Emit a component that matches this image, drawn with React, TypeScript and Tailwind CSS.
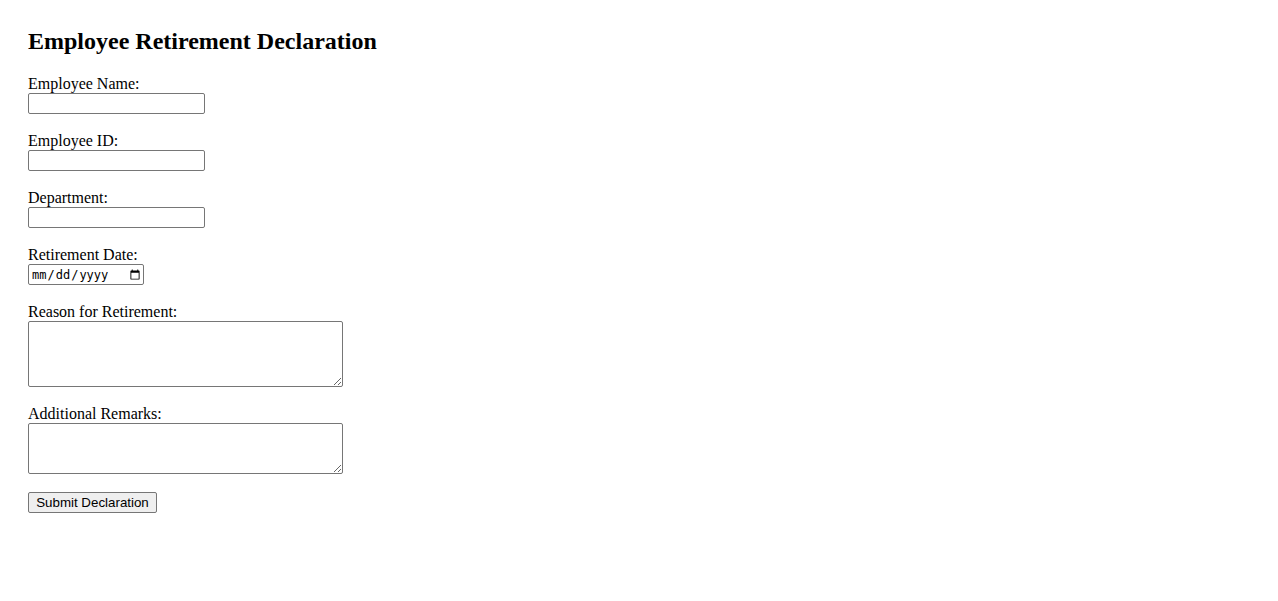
import React from "react";

const fields = [
  { id: "name", label: "Employee Name:", type: "text" },
  { id: "empId", label: "Employee ID:", type: "text" },
  { id: "dept", label: "Department:", type: "text" },
];

const App = () => {
  return (
    <div className="min-h-[601px] bg-white pt-[28px] pl-[28px] font-['Liberation_Serif',serif] text-[16px] text-black">
      <h2 className="h-[28px] text-[24px] font-bold leading-[26px]">Employee Retirement Declaration</h2>
      <form className="mt-[19px] flex flex-col gap-[18px]" onSubmit={(e) => e.preventDefault()}>
        {fields.map((f) => (
          <div key={f.id} className="flex flex-col items-start">
            <label htmlFor={f.id} className="h-[18px] leading-[18px]">
              {f.label}
            </label>
            <input
              id={f.id}
              type={f.type}
              className="h-[21px] w-[177px] rounded-[2px] border border-[#767676] bg-white px-[2px] font-['Liberation_Sans',sans-serif] text-[13.33px]"
            />
          </div>
        ))}
        <div className="flex flex-col items-start">
          <label htmlFor="retDate" className="h-[18px] leading-[18px]">
            Retirement Date:
          </label>
          <input
            id="retDate"
            type="date"
            className="h-[21px] w-[116px] rounded-[2px] border border-[#767676] bg-white pl-[2px] font-['DejaVu_Sans_Mono',monospace] text-[12px]"
          />
        </div>
        <div className="flex flex-col items-start">
          <label htmlFor="reason" className="h-[18px] leading-[18px]">
            Reason for Retirement:
          </label>
          <textarea
            id="reason"
            className="h-[66px] w-[315px] rounded-[2px] border border-[#767676] bg-white p-[2px] font-['Liberation_Mono',monospace] text-[13.33px]"
          />
        </div>
        <div className="flex flex-col items-start">
          <label htmlFor="remarks" className="h-[18px] leading-[18px]">
            Additional Remarks:
          </label>
          <textarea
            id="remarks"
            className="h-[51px] w-[315px] rounded-[2px] border border-[#767676] bg-white p-[2px] font-['Liberation_Mono',monospace] text-[13.33px]"
          />
        </div>
        <div className="flex">
          <button
            type="submit"
            className="h-[21px] w-[129px] rounded-[2px] border border-[#767676] bg-[#efefef] font-['Liberation_Sans',sans-serif] text-[13.33px] leading-[15px] text-black"
          >
            Submit Declaration
          </button>
        </div>
      </form>
    </div>
  );
};

export default App;
